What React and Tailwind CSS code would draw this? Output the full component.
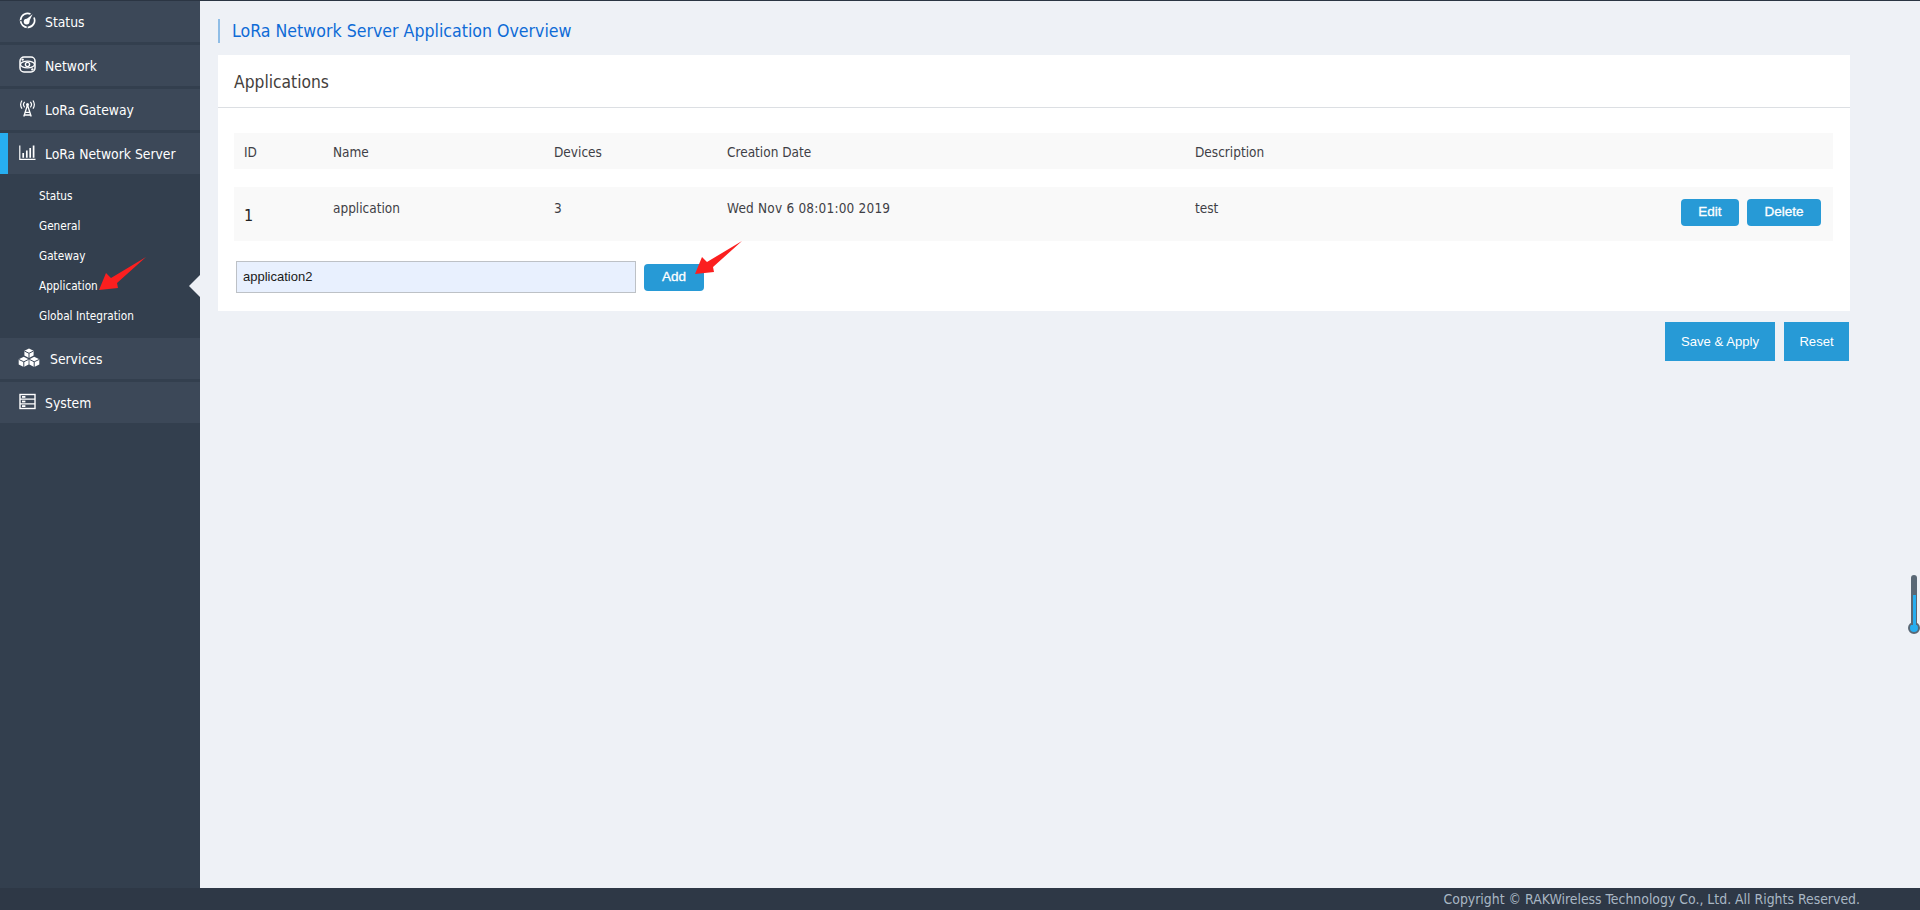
import React from "react";

const Ico = ({ children }) => (
  <svg width="17" height="17" viewBox="0 0 17 17" fill="none" stroke="#fff" strokeWidth="1.5" className="-mt-[2px] shrink-0">
    {children}
  </svg>
);

const StatusIcon = () => (
  <Ico>
    <path d="M11.5 2 A7 7 0 1 0 15 5.5" strokeWidth="1.7" />
    <path d="M6 8.2 L13.6 2.2 L9.4 11 Z" fill="#fff" stroke="none" />
    <circle cx="7.6" cy="9.6" r="2.9" fill="#fff" stroke="none" />
    <path d="M1 8.7h2.2M8.2 14v2.5" stroke="#3c4858" strokeWidth="1" />
  </Ico>
);
const NetworkIcon = () => (
  <Ico>
    <rect x="1" y="1" width="15" height="15" rx="4" strokeWidth="1.5" />
    <ellipse cx="8.5" cy="8.5" rx="7" ry="3.3" strokeWidth="1.3" />
    <circle cx="8.5" cy="8.5" r="2.1" strokeWidth="1.4" />
    <circle cx="3.6" cy="3.6" r="1.2" fill="#fff" stroke="none" />
    <circle cx="13.4" cy="13.4" r="1.2" fill="#fff" stroke="none" />
  </Ico>
);
const GatewayIcon = () => (
  <Ico>
    <path d="M8.5 5 L4.8 16.5 M8.5 5 L12.2 16.5 M6.2 12.4h4.6M5.4 15h6.2" strokeWidth="1.3" />
    <circle cx="8.5" cy="4.6" r="1.5" fill="#fff" stroke="none" />
    <path d="M5.7 1.8a4.2 4.2 0 0 0 0 5.6M11.3 1.8a4.2 4.2 0 0 1 0 5.6M3 .5a7.4 7.4 0 0 0 0 8.2M14 .5a7.4 7.4 0 0 1 0 8.2" strokeWidth="1.2" />
  </Ico>
);
const ChartIcon = () => (
  <Ico>
    <path d="M.8 1.5V15.4H16.5" strokeWidth="1.2" />
    <path d="M4.2 13.8V9M7.8 13.8V6.5M11.2 13.8V4M14.6 13.8V1.5" strokeWidth="1.7" />
  </Ico>
);
const ServicesIcon = () => (
  <svg width="22" height="20" viewBox="0 0 22 20" fill="#fff" className="-mt-[2px] shrink-0">
    <path d="M11 .5 L15.6 2.8 V7.6 L11 10 L6.4 7.6 V2.8Z" />
    <path d="M5.8 8.8 L10.6 11.2 V16.4 L5.8 19 L.7 16.4 V11.2Z" />
    <path d="M16.2 8.8 L21.3 11.2 V16.4 L16.2 19 L11.4 16.4 V11.2Z" />
    <path d="M6.4 3 L11 5.3 L15.6 3 M11 5.3V10 M.7 11.4 L5.8 13.8 L10.6 11.4 M5.8 13.8V19 M11.4 11.4 L16.2 13.8 L21.3 11.4 M16.2 13.8V19" stroke="#3c4858" strokeWidth="1" fill="none" />
  </svg>
);
const SystemIcon = () => (
  <Ico>
    <rect x="1" y="1.5" width="15" height="14" strokeWidth="1.4" />
    <path d="M1 6.2h15M1 10.8h15" strokeWidth="1.2" />
    <rect x="3" y="3" width="3.4" height="1.8" fill="#fff" stroke="none" />
    <rect x="3" y="7.6" width="3.4" height="1.8" fill="#fff" stroke="none" />
    <rect x="3" y="12.2" width="3.4" height="1.8" fill="#fff" stroke="none" />
  </Ico>
);

const RedArrow = ({ className }) => (
  <svg width="47" height="33" viewBox="0 0 47 33" className={`absolute ${className}`}>
    <path d="M0 33 L7 16 L12 21 L47 0 L18 26 L19 31 Z" fill="#fb1f1f" />
  </svg>
);

const MenuItem = ({ icon, label, active, gap = "gap-[9px]", pl = "pl-[19px]" }) => (
  <div className={`relative flex h-[41px] items-center ${gap} ${pl} bg-[#3c4858] text-[13.8px] text-white`}>
    {active && <div className="absolute inset-y-0 left-0 w-2 bg-[#27aef0]" />}
    {icon}
    <span className="pt-[2px]">{label}</span>
  </div>
);

const SubItem = ({ label, children }) => (
  <div className="relative flex h-[30px] items-center pl-[39px] pt-[2px] text-[11.7px] text-white">
    {label}
    {children}
  </div>
);

const Btn = ({ label, className }) => (
  <button className={`flex items-center justify-center bg-[#279ad6] font-['Liberation_Sans',Arial,sans-serif] text-white ${className}`}>
    {label}
  </button>
);

export default function App() {
  return (
    <div className="flex h-[910px] w-[1920px] flex-col overflow-hidden border-t border-t-[#2b3543] bg-[#eef1f6] font-['DejaVu_Sans_Condensed','DejaVu_Sans',sans-serif]">
      <div className="flex min-h-0 flex-1">
        <aside className="flex w-[200px] shrink-0 flex-col bg-[#333f4e]">
          <div className="flex flex-col gap-[3px]">
            <MenuItem icon={<StatusIcon />} label="Status" />
            <MenuItem icon={<NetworkIcon />} label="Network" />
            <MenuItem icon={<GatewayIcon />} label="LoRa Gateway" />
            <MenuItem icon={<ChartIcon />} label="LoRa Network Server" active />
          </div>
          <div className="flex flex-col py-[7px]">
            <SubItem label="Status" />
            <SubItem label="General" />
            <SubItem label="Gateway" />
            <SubItem label="Application">
              <RedArrow className="left-[99px] top-[-14px]" />
              <div className="absolute right-0 top-[4px] h-0 w-0 border-y-[11px] border-r-[11px] border-y-transparent border-r-[#eef1f6]" />
            </SubItem>
            <SubItem label="Global Integration" />
          </div>
          <div className="flex flex-col gap-[3px]">
            <MenuItem icon={<ServicesIcon />} label="Services" pl="pl-[18px]" gap="gap-[10px]" />
            <MenuItem icon={<SystemIcon />} label="System" />
          </div>
        </aside>

        <main className="relative min-w-0 flex-1 pl-[18px] pr-[70px] pt-[18px]">
          <h1 className="flex h-6 items-center border-l-2 border-l-[#8fbde6] pl-3 text-[17.6px] font-normal text-[#0f6bd6]">
            LoRa Network Server Application Overview
          </h1>
          <section className="mt-3 h-[256px] bg-white">
            <div className="flex h-[53px] items-center border-b border-b-[#dcdfe3] pl-4 pt-[4px] text-[17.3px] text-[#44403c]">
              Applications
            </div>
            <div className="pl-4 pr-[17px] pt-[25px]">
              <div className="grid h-9 grid-cols-[89px_221px_173px_468px_1fr] items-center bg-[#f9f9f9] pl-[10px] pt-[2px] text-[13.5px] text-[#3f3f46]">
                <span>ID</span>
                <span>Name</span>
                <span>Devices</span>
                <span>Creation Date</span>
                <span>Description</span>
              </div>
              <div className="mt-[18px] grid h-[54px] grid-cols-[89px_221px_173px_468px_1fr] items-start bg-[#f9f9f9] pl-[10px] text-[13.5px] text-[#3f3f46]">
                <span className="pt-[17px] text-[16px] text-[#222]">1</span>
                <span className="pt-[11px]">application</span>
                <span className="pt-[11px]">3</span>
                <span className="pt-[11px] tracking-[0.2px]">Wed Nov 6 08:01:00 2019</span>
                <div className="flex items-start justify-between pr-[12px] pt-3">
                  <span className="-mt-px">test</span>
                  <div className="flex gap-2">
                    <Btn label="Edit" className="h-[27px] w-[58px] rounded-[4px] text-[13.5px] [-webkit-text-stroke:0.3px_white]" />
                    <Btn label="Delete" className="h-[27px] w-[74px] rounded-[4px] text-[13.5px] [-webkit-text-stroke:0.3px_white]" />
                  </div>
                </div>
              </div>
              <div className="mt-5 flex items-center gap-2 pl-[2px]">
                <div className="flex h-8 w-[400px] items-center border border-[#bdc1c6] bg-[#e8f0fe] pl-[6px] font-['Liberation_Sans',Arial,sans-serif] text-[13px] text-[#1a1a1a]">
                  application2
                </div>
                <div className="relative mt-px">
                  <Btn label="Add" className="h-[27px] w-[60px] rounded-[4px] text-[13.5px] [-webkit-text-stroke:0.3px_white]" />
                  <RedArrow className="left-[51px] top-[-23px]" />
                </div>
              </div>
            </div>
          </section>
          <div className="mt-[11px] flex justify-end gap-[9px] pr-px">
            <Btn label="Save & Apply" className="h-[39px] w-[110px] text-[13.1px]" />
            <Btn label="Reset" className="h-[39px] w-[65px] text-[13.1px]" />
          </div>
          <div className="absolute left-[1708px] top-[574px] flex w-3 flex-col items-center">
            <div className="relative h-[50px] w-[6px] rounded-t-[3px] bg-[#5a6875]">
              <div className="absolute inset-x-[1.5px] bottom-0 top-[20px] bg-[#27aef0]" />
            </div>
            <div className="-mt-[3px] h-3 w-3 shrink-0 rounded-full border-2 border-[#5a6875] bg-[#27aef0]" />
          </div>
        </main>
      </div>
      <footer className="flex h-[22px] shrink-0 items-center justify-end bg-[#2e3846] pr-[60px] text-[13.9px] text-[#a9b7c4]">
        Copyright © RAKWireless Technology Co., Ltd. All Rights Reserved.
      </footer>
    </div>
  );
}
